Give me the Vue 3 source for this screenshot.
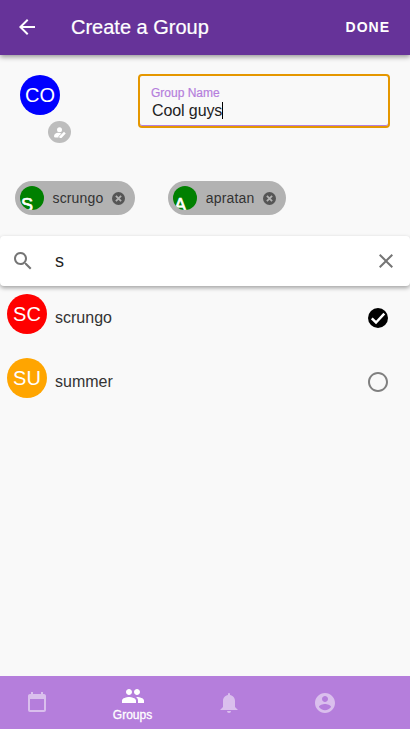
<script setup>
import { ref } from 'vue'

const groupName = ref('Cool guys')
const query = ref('s')
const chips = [
  { name: 'scrungo', letter: 'S' },
  { name: 'apratan', letter: 'A' },
]
const users = [
  { name: 'scrungo', initials: 'SC', tone: 'red', selected: true },
  { name: 'summer', initials: 'SU', tone: 'orange', selected: false },
]
const tabs = [
  { id: 'calendar', path: 'M19,19H5V8H19M16,1V3H8V1H6V3H5C3.89,3 3,3.89 3,5V19A2,2 0 0,0 5,21H19A2,2 0 0,0 21,19V5C21,3.89 20.1,3 19,3H18V1' },
  { id: 'groups', label: 'Groups', path: 'M16 11c1.66 0 2.99-1.34 2.99-3S17.66 5 16 5s-3 1.34-3 3 1.34 3 3 3zm-8 0c1.66 0 2.99-1.34 2.99-3S9.66 5 8 5 5 6.34 5 8s1.34 3 3 3zm0 2c-2.33 0-7 1.17-7 3.5V19h14v-2.5c0-2.33-4.67-3.5-7-3.5zm8 0c-.29 0-.62.02-.97.05 1.16.84 1.97 1.97 1.97 3.45V19h6v-2.5c0-2.33-4.67-3.5-7-3.5z' },
  { id: 'alerts', path: 'M14,20A2,2 0 0,1 12,22A2,2 0 0,1 10,20H14M12,2A1,1 0 0,1 13,3V4.08C15.84,4.56 18,7.03 18,10V16L21,19H3L6,16V10C6,7.03 8.16,4.56 11,4.08V3A1,1 0 0,1 12,2Z' },
  { id: 'account', path: 'M12 2C6.48 2 2 6.48 2 12s4.48 10 10 10 10-4.48 10-10S17.52 2 12 2zm0 3c1.66 0 3 1.34 3 3s-1.34 3-3 3-3-1.34-3-3 1.34-3 3-3zm0 14.2c-2.5 0-4.71-1.28-6-3.22.03-1.99 4-3.08 6-3.08 1.99 0 5.97 1.09 6 3.08-1.29 1.94-3.5 3.22-6 3.22z' },
]
</script>

<template>
  <div class="screen">
    <header class="topbar">
      <svg class="icon" viewBox="0 0 24 24"><path d="M20 11H7.83l5.59-5.59L12 4l-8 8 8 8 1.41-1.41L7.83 13H20v-2z" /></svg>
      <h1>Create a Group</h1>
      <button class="done">DONE</button>
    </header>

    <section class="details">
      <div class="photo">
        <div class="avatar blue">CO</div>
        <div class="edit">
          <svg viewBox="0 0 24 22">
            <circle cx="11" cy="5.5" r="5" />
            <path d="M9 21H2.500A2.500 2.500 0 0 1 0 18.500C0 14.500 4 11.500 8 11.500c2.500 0 4.500.3 7 1.500L9 18.500z" />
            <path d="M11 18.500l9-9 3.500 3.500L15 22h-4z" />
          </svg>
        </div>
      </div>
      <div class="field">
        <span class="label">Group Name</span>
        <span class="value"><span>{{ groupName }}</span><i class="caret"></i></span>
      </div>
    </section>

    <section class="chips">
      <div v-for="c in chips" :key="c.name" class="chip">
        <span class="mini"><b>{{ c.letter }}</b></span>
        <span class="chip-name">{{ c.name }}</span>
        <svg class="remove" viewBox="0 0 20 20"><circle cx="10" cy="10" r="10" /><path d="M6 6l8 8M14 6l-8 8" /></svg>
      </div>
    </section>

    <section class="search">
      <svg class="icon" viewBox="0 0 24 24"><path d="M15.5 14h-.79l-.28-.27C15.41 12.59 16 11.11 16 9.5 16 5.91 13.09 3 9.5 3S3 5.91 3 9.5 5.91 16 9.5 16c1.61 0 3.09-.59 4.23-1.57l.27.28v.79l5 4.99L20.49 19l-4.99-5zm-6 0C7.01 14 5 11.99 5 9.5S7.01 5 9.5 5 14 7.01 14 9.5 11.99 14 9.5 14z" /></svg>
      <span class="query">{{ query }}</span>
      <svg class="icon" viewBox="0 0 24 24"><path d="M19 6.41L17.59 5 12 10.59 6.41 5 5 6.41 10.59 12 5 17.59 6.41 19 12 13.41 17.59 19 19 17.59 13.41 12z" /></svg>
    </section>

    <ul class="users">
      <li v-for="u in users" :key="u.name">
        <div class="avatar" :class="u.tone">{{ u.initials }}</div>
        <span class="user-name">{{ u.name }}</span>
        <svg v-if="u.selected" class="icon check" viewBox="0 0 24 24"><circle cx="12" cy="12" r="10" /><path class="tick" d="M5.800 12.300l4.200 4.200 8.300-8.800" /></svg>
        <svg v-else class="icon check empty" viewBox="0 0 24 24"><path d="M12 2C6.48 2 2 6.48 2 12s4.48 10 10 10 10-4.48 10-10S17.52 2 12 2zm0 18c-4.42 0-8-3.58-8-8s3.58-8 8-8 8 3.58 8 8-3.58 8-8 8z" /></svg>
      </li>
    </ul>

    <nav class="tabs">
      <div v-for="t in tabs" :key="t.id" class="tab" :class="{ active: t.label }">
        <svg class="icon" viewBox="0 0 24 24"><path :d="t.path" /></svg>
        <span v-if="t.label">{{ t.label }}</span>
      </div>
    </nav>
  </div>
</template>

<style>
body { background: #f9f9f9; overflow: hidden; }
</style>

<style scoped>
.screen {
  display: flex;
  flex-direction: column;
  height: 729px;
  overflow: hidden;
  background: #f9f9f9;
  font-family: "Liberation Sans", Arial, sans-serif;
  color: #333;
}
svg { display: block; flex: none; fill: currentColor; }
.icon { width: 24px; height: 24px; }
.topbar {
  display: flex;
  align-items: center;
  flex: none;
  height: 55px;
  box-sizing: border-box;
  padding: 0 20px 1px 15px;
  background: #663399;
  color: #fff;
  box-shadow: 0 2px 5px rgba(0, 0, 0, 0.4);
}
h1 { flex: 1; margin: 0 0 0 32px; font-size: 20px; line-height: 24px; font-weight: 400; -webkit-text-stroke: 0.2px; }
.done {
  padding: 0;
  border: 0;
  background: none;
  color: inherit;
  font: 700 14px/20px "Liberation Sans", Arial, sans-serif;
  letter-spacing: 1px;
}
.details { display: flex; flex: none; justify-content: space-between; height: 107px; padding: 19px 20px 0; }
.photo { padding-top: 1px; }
.avatar {
  display: flex;
  align-items: center;
  justify-content: center;
  flex: none;
  width: 40px;
  height: 40px;
  border-radius: 50%;
  color: #fff;
  font-size: 20px;
}
.blue { background: #00f; }
.red { background: #f00; }
.orange { background: orange; }
.edit {
  display: flex;
  align-items: center;
  justify-content: center;
  width: 23px;
  height: 22px;
  margin: 6px 0 0 28px;
  border-radius: 50%;
  background: #bdbdbd;
  color: #fff;
}
.edit svg { width: 12px; height: 11px; margin-top: 1px; }
.field {
  display: flex;
  flex-direction: column;
  width: 252px;
  height: 54px;
  box-sizing: border-box;
  padding: 10px 11px 0;
  border: 2px solid #e59700;
  border-radius: 4px;
  box-shadow: inset 0 -1px #b57edc;
}
.label { font-size: 12px; line-height: 14px; color: #b57edc; -webkit-text-stroke: 0.2px; }
.value { display: flex; padding-left: 1px; font-size: 16px; line-height: 21px; letter-spacing: -0.1px; color: #222; }
.caret { width: 1px; height: 17px; margin-top: 2px; background: #000; }
.chips { display: flex; flex: none; gap: 33px; height: 55px; padding-left: 15px; }
.chip {
  display: flex;
  align-items: center;
  height: 34px;
  box-sizing: border-box;
  padding: 0 10px 0 5px;
  border-radius: 17px;
  background: #b2b2b2;
  font-size: 14px;
}
.mini { width: 24px; height: 24px; border-radius: 50%; background: green; overflow: hidden; }
.mini b { display: block; padding: 8px 0 0 1px; color: #fff; font-size: 18px; line-height: 22px; font-weight: 400; -webkit-text-stroke: 0.7px #fff; }
.chip-name { margin-left: 8.500px; letter-spacing: 0.15px; }
.remove { width: 13px; height: 13px; margin-left: 9px; color: #555; }
.remove path { stroke: #b2b2b2; stroke-width: 2.800; }
.search {
  display: flex;
  align-items: center;
  flex: none;
  height: 50px;
  box-sizing: border-box;
  padding: 0 12px 0 11px;
  border-radius: 4px;
  background: #fff;
  box-shadow: 0 2px 4px rgba(0, 0, 0, 0.35);
  color: #757575;
}
.query { flex: 1; margin-left: 20px; font-size: 18px; color: #222; }
.users { flex: 1; margin: 0; padding: 8px 20px 0 7px; list-style: none; }
li { display: flex; height: 64px; }
.user-name { flex: 1; margin: 14px 0 0 8px; font-size: 16px; line-height: 20px; }
.check { margin-top: 12px; color: #000; }
.tick { fill: none; stroke: #fff; stroke-width: 2.500; }
.empty { color: #808080; }
.tabs { display: flex; flex: none; height: 53px; margin-left: -11.500px; background: #b57edc; color: #fff; box-shadow: -12px 0 #b57edc; }
.tab { display: flex; flex-direction: column; align-items: center; justify-content: center; width: 96px; opacity: 0.5; }
.tab span { font-size: 12px; line-height: 14px; -webkit-text-stroke: 0.3px; }
.tab.active { opacity: 1; }
</style>
